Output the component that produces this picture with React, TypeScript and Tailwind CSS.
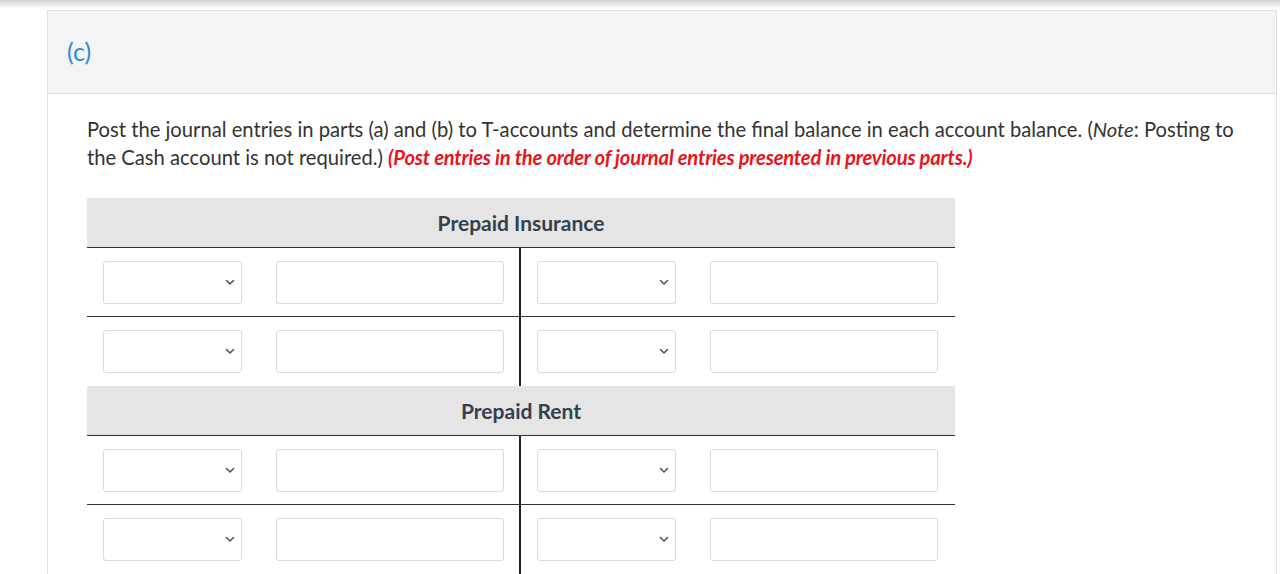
import React from 'react';

const ACCOUNTS = ['Prepaid Insurance', 'Prepaid Rent'];

const Chevron = () => (
    <svg width="10" height="7" viewBox="0 0 10 7" fill="none" className="text-[#555]">
        <path d="M1.5 1.5 L5 5 L8.5 1.5" stroke="currentColor" strokeWidth="1.6" strokeLinecap="round" strokeLinejoin="round" />
    </svg>
);

const EntryCell: React.FC = () => (
    <div className="flex items-center pl-[16px] gap-[34px]">
        <div className="w-[139px] h-[43px] border border-[#dadada] rounded-[3px] bg-white flex items-center justify-end pr-[6px]">
            <Chevron />
        </div>
        <div className="w-[228px] h-[43px] border border-[#dadada] rounded-[3px] bg-white" />
    </div>
);

const Row: React.FC<{ last?: boolean }> = ({ last }) => (
    <div className={`grid grid-cols-2 ${last ? 'h-[69px]' : 'h-[69px] border-b border-[#333]'}`}>
        <div className="border-r-2 border-[#222] flex items-center">
            <EntryCell />
        </div>
        <div className="flex items-center">
            <EntryCell />
        </div>
    </div>
);

const TAccount: React.FC<{ title: string }> = ({ title }) => (
    <div>
        <div className="h-[50px] bg-[#e5e5e5] border-b border-[#333] flex items-center justify-center pt-[1px]">
            <span className="text-[21px] font-bold text-[#34414d]">{title}</span>
        </div>
        <Row />
        <Row last />
    </div>
);

export default function App() {
    return (
        <div className="w-full h-[574px] bg-white overflow-hidden font-['Lato',sans-serif]">
            {/* shadow from the bar above */}
            <div className="h-[9px] bg-gradient-to-b from-[#d2d2d2] to-white" />
            <div className="pl-[47px] pr-[3px] pt-[1px]">
                <div className="border border-[#e2e2e2] bg-white">
                    <div className="h-[83px] bg-[#f4f4f4] border-b border-[#dedede] flex items-center px-[19px]">
                        <span className="text-[25px] text-[#2f8ad3]">(c)</span>
                    </div>
                    <div className="pl-[39px] pr-[20px] pt-[21px]">
                        <p className="text-[20.2px] leading-[28px] text-[#333]">
                            Post the journal entries in parts (a) and (b) to T-accounts and determine the final balance in each account balance. (<i>Note</i>: Posting to the Cash account is not required.){' '}
                            <span className="text-[#e8141c] font-bold italic tracking-[-0.2px]">(Post entries in the order of journal entries presented in previous parts.)</span>
                        </p>
                        <div className="w-[868px] mt-[27px]">
                            {ACCOUNTS.map((a) => (
                                <TAccount key={a} title={a} />
                            ))}
                        </div>
                    </div>
                </div>
            </div>
        </div>
    );
}
